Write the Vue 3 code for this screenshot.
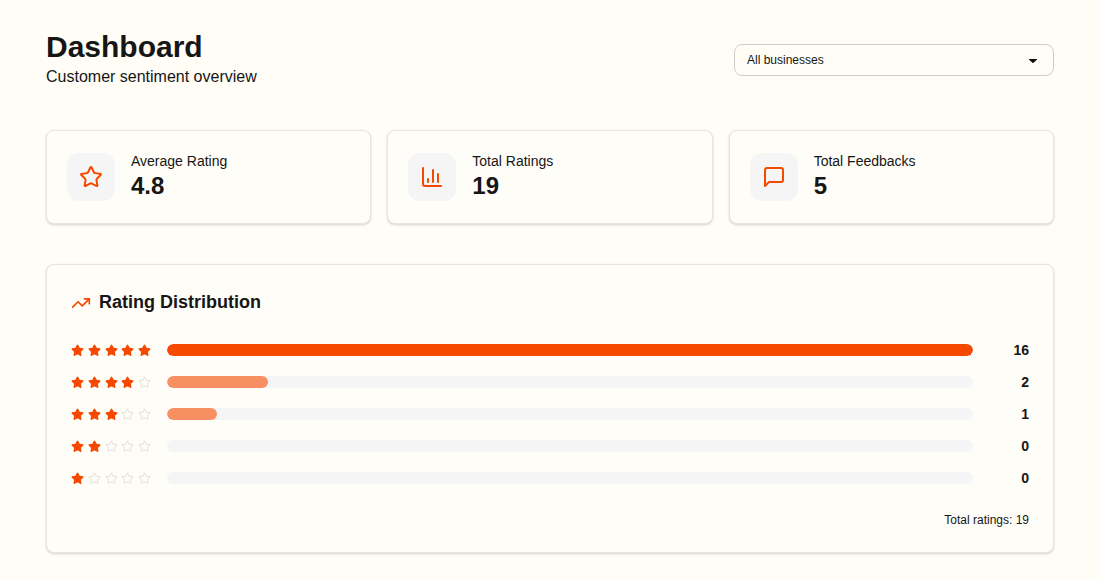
<script setup>
import { ref } from 'vue'

const business = ref('all')

const stats = [
  { icon: 'star', label: 'Average Rating', value: '4.8' },
  { icon: 'chart', label: 'Total Ratings', value: '19' },
  { icon: 'message', label: 'Total Feedbacks', value: '5' },
]

const rows = [
  { stars: 5, count: 16 },
  { stars: 4, count: 2 },
  { stars: 3, count: 1 },
  { stars: 2, count: 0 },
  { stars: 1, count: 0 },
]

const highest = Math.max(...rows.map((row) => row.count))
const total = rows.reduce((sum, row) => sum + row.count, 0)

const starPath =
  'M11.525 2.295a.53.53 0 0 1 .95 0l2.31 4.679a2.123 2.123 0 0 0 1.595 1.16l5.166.756a.53.53 0 0 1 .294.904l-3.736 3.638a2.123 2.123 0 0 0-.611 1.878l.882 5.14a.53.53 0 0 1-.771.56l-4.618-2.428a2.122 2.122 0 0 0-1.973 0L6.396 21.01a.53.53 0 0 1-.77-.56l.881-5.139a2.122 2.122 0 0 0-.611-1.879L2.16 9.795a.53.53 0 0 1 .294-.906l5.165-.755a2.122 2.122 0 0 0 1.597-1.16z'
</script>

<template>
  <main class="page">
    <header class="header">
      <div>
        <h1 class="title">Dashboard</h1>
        <p class="subtitle">Customer sentiment overview</p>
      </div>
      <div class="picker">
        <select v-model="business" class="select" aria-label="Business">
          <option value="all">All businesses</option>
        </select>
        <svg class="caret" viewBox="0 0 8 4" aria-hidden="true">
          <path d="M0.4 0h7.2a.4.4 0 0 1 .3.7L4.6 3.8a.8.8 0 0 1-1.2 0L.1.7A.4.4 0 0 1 .4 0z" />
        </svg>
      </div>
    </header>

    <section class="stats" aria-label="Summary">
      <article v-for="stat in stats" :key="stat.label" class="card stat">
        <div class="badge">
          <svg class="icon" viewBox="0 0 24 24" aria-hidden="true">
            <path v-if="stat.icon === 'star'" :d="starPath" />
            <template v-else-if="stat.icon === 'chart'">
              <path d="M3 3v16a2 2 0 0 0 2 2h16" />
              <path d="M18 17V9" />
              <path d="M13 17V5" />
              <path d="M8 17v-3" />
            </template>
            <path v-else d="M21 15a2 2 0 0 1-2 2H7l-4 4V5a2 2 0 0 1 2-2h14a2 2 0 0 1 2 2z" />
          </svg>
        </div>
        <div class="figures">
          <p class="label">{{ stat.label }}</p>
          <p class="value">{{ stat.value }}</p>
        </div>
      </article>
    </section>

    <section class="card panel">
      <h2 class="heading">
        <svg class="trend" viewBox="0 0 24 24" aria-hidden="true">
          <path d="M16 7h6v6" />
          <path d="m22 7-8.5 8.5-5-5L2 17" />
        </svg>
        Rating Distribution
      </h2>
      <ul class="rows">
        <li v-for="row in rows" :key="row.stars" class="row">
          <div class="stars" role="img" :aria-label="`${row.stars} of 5 stars`">
            <svg
              v-for="n in 5"
              :key="n"
              class="star"
              :class="{ on: n <= row.stars }"
              viewBox="0 0 24 24"
            >
              <path :d="starPath" />
            </svg>
          </div>
          <div class="track">
            <div
              class="fill"
              :class="{ top: row.count === highest }"
              :style="{ width: (row.count / highest) * 100 + '%' }"
            ></div>
          </div>
          <span class="count">{{ row.count }}</span>
        </li>
      </ul>
      <p class="total">Total ratings: {{ total }}</p>
    </section>
  </main>
</template>

<style>
body {
  margin: 0;
  background: #fffdf6;
}
</style>

<style scoped>
.page {
  max-width: 1152px;
  margin: 0 auto;
  padding: 30px 46px 27px;
  box-sizing: border-box;
  font-family: "Liberation Sans", Arial, sans-serif;
  color: #161616;
}

h1,
h2,
p,
ul {
  margin: 0;
  padding: 0;
}

.header {
  display: flex;
  align-items: center;
  justify-content: space-between;
  gap: 16px;
  margin-bottom: 40px;
}

.title {
  font-size: 30px;
  line-height: 34px;
  font-weight: 700;
}

.subtitle {
  font-size: 16px;
  line-height: 26px;
}

.picker {
  position: relative;
  width: 320px;
}

.select {
  display: block;
  width: 100%;
  height: 32px;
  padding: 0 32px 0 12px;
  border: 1px solid #d0ccc8;
  border-radius: 8px;
  background: transparent;
  appearance: none;
  font-family: inherit;
  font-size: 12px;
  line-height: 16px;
  color: inherit;
}

.caret {
  position: absolute;
  right: 17px;
  top: 15px;
  width: 8px;
  height: 4px;
  fill: #111;
  pointer-events: none;
}

.card {
  border: 1px solid #e8e5df;
  border-radius: 8px;
  background: #fffdf7;
  box-shadow: 0 1px 3px rgba(0, 0, 0, 0.1), 0 1px 2px rgba(0, 0, 0, 0.08);
}

.stats {
  display: grid;
  grid-template-columns: repeat(3, 1fr);
  gap: 16px;
  margin-bottom: 40px;
}

.stat {
  display: flex;
  align-items: center;
  gap: 16px;
  padding: 20px;
}

.badge {
  display: flex;
  align-items: center;
  justify-content: center;
  width: 48px;
  height: 48px;
  border-radius: 12px;
  background: #f5f5f5;
}

.icon,
.trend {
  width: 24px;
  height: 24px;
  fill: none;
  stroke: #f54900;
  stroke-width: 2;
  stroke-linecap: round;
  stroke-linejoin: round;
}

.figures {
  padding-bottom: 2px;
}

.label {
  font-size: 14px;
  line-height: 20px;
}

.value {
  font-size: 24px;
  line-height: 30px;
  font-weight: 700;
}

.panel {
  padding: 24px;
}

.heading {
  display: flex;
  align-items: center;
  gap: 8px;
  margin-bottom: 24px;
  font-size: 18px;
  line-height: 27px;
  font-weight: 700;
}

.trend {
  width: 20px;
  height: 20px;
}

.rows {
  display: flex;
  flex-direction: column;
  gap: 12px;
  list-style: none;
}

.row {
  display: flex;
  align-items: center;
  gap: 16px;
}

.stars {
  display: flex;
  justify-content: space-between;
  width: 80px;
}

.star {
  width: 13px;
  height: 13px;
  fill: none;
  stroke: #e6e4e0;
  stroke-width: 2;
  stroke-linejoin: round;
}

.star.on {
  fill: #f54900;
  stroke: #f54900;
}

.track {
  flex: 1;
  height: 12px;
  border-radius: 6px;
  background: #f5f5f5;
  overflow: hidden;
}

.fill {
  height: 100%;
  border-radius: 6px;
  background: #f88f62;
}

.fill.top {
  background: #f54900;
}

.count {
  width: 40px;
  font-size: 14px;
  line-height: 20px;
  font-weight: 700;
  text-align: right;
}

.total {
  margin-top: 24px;
  font-size: 12px;
  line-height: 16px;
  text-align: right;
}
</style>
